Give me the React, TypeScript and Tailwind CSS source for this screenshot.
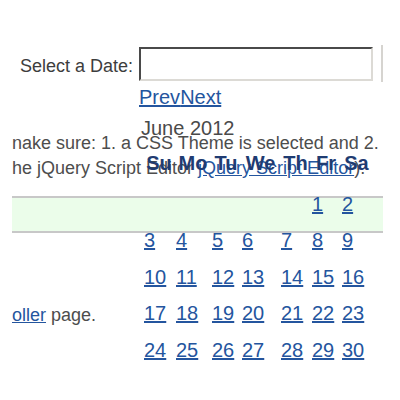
import React from "react";

const weeks: (number | null)[][] = [
  [null, null, null, null, null, 1, 2],
  [3, 4, 5, 6, 7, 8, 9],
  [10, 11, 12, 13, 14, 15, 16],
  [17, 18, 19, 20, 21, 22, 23],
  [24, 25, 26, 27, 28, 29, 30],
];
const days = ["Su", "Mo", "Tu", "We", "Th", "Fr", "Sa"];

export default function App() {
  return (
    <div
      className="relative w-[400px] h-[400px] overflow-hidden bg-white text-[18px] text-[#4d4d4d]"
      style={{ fontFamily: '"Liberation Sans", Arial, sans-serif' }}
    >
      <div className="pt-[47px]">
        {/* form row */}
        <div className="flex items-start h-[36px]">
          <div className="w-[133px] text-right leading-[24px] mt-[7px] text-[#3d3d3d]">Select a Date:</div>
          <div className="ml-[6px] w-[234px] h-[34px] border-2 border-t-[#4a4a4a] border-l-[#4a4a4a] border-r-[#dcdad5] border-b-[#dcdad5] bg-white" />
          <div className="ml-[8px] w-[2px] h-[37px] -mt-[2px] bg-[#d6d4d0]" />
        </div>

        {/* background content */}
        <div className="pl-[12px] mt-[48px] leading-[25px] whitespace-nowrap">
          <div>nake sure: 1. a CSS Theme is selected and 2.</div>
          <div>
            he jQuery Script Editor{" "}
            <span className="text-[#24559e] underline">jQuery Script Editor</span>).
          </div>
        </div>
        <div className="ml-[12px] w-[371px] mt-[15px] h-[37px] border-y-2 border-[#c8c8c8] bg-[#ebfdea]" />
        <div className="pl-[12px] mt-[70px] leading-[24px]">
          <span className="text-[#24559e] underline">oller</span> page.
        </div>
      </div>

      {/* datepicker overlay */}
      <div className="absolute left-[139px] top-[83px]">
        <div className="h-[28px] flex items-center text-[20px] leading-[24px]">
          <span className="text-[#24559e] underline">Prev</span>
          <span className="text-[#24559e] underline">Next</span>
        </div>
        <div className="h-[34px] flex items-center pl-[2px] text-[20px] text-[#4a4a4a]">June 2012</div>
        <div className="ml-[4px]">
          <div className="grid grid-cols-[32px_36px_30px_39px_31px_30px_31px] h-[36px] items-center text-[20px] font-bold text-[#1f3c72]">
            {days.map((d) => (
              <div key={d} className="text-center">
                {d}
              </div>
            ))}
          </div>
          <div className="mt-[5px] grid grid-cols-[32px_36px_30px_39px_31px_30px_31px] auto-rows-[36.5px] items-center text-[20px] leading-[23px]">
            {weeks.flatMap((w, wi) =>
              w.map((d, di) => (
                <div key={wi + "-" + di} className="pl-[1px]">
                  {d !== null && <span className="text-[#24559e] underline">{d}</span>}
                </div>
              ))
            )}
          </div>
        </div>
      </div>
    </div>
  );
}
